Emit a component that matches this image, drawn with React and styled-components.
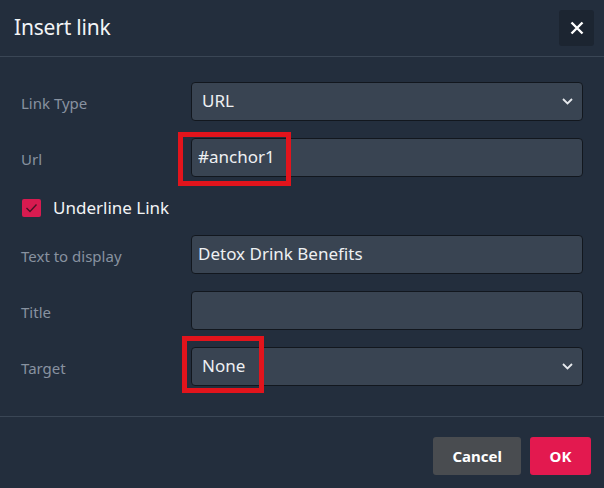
import React from 'react'
import styled, { createGlobalStyle } from 'styled-components'

const GlobalStyle = createGlobalStyle`
   html, body {
      margin: 0;
      padding: 0;
      background: #232e3d;
   }
   * {
      box-sizing: border-box;
   }
`

const fields = [
   { label: 'Link Type', kind: 'select', value: 'URL' },
   { label: 'Url', kind: 'input', value: '#anchor1', mark: { left: -13, top: -6, width: 113, height: 54 } },
   { kind: 'check', label: 'Underline Link' },
   { label: 'Text to display', kind: 'input', value: 'Detox Drink Benefits' },
   { label: 'Title', kind: 'input', value: '' },
   { label: 'Target', kind: 'select', value: 'None', mark: { left: -9, top: -11, width: 82, height: 57 } },
]

function Chevron() {
   return (
      <ChevronIcon width="11" height="7" viewBox="0 0 11 7">
         <path d="M1 1l4.5 4.5L10 1" fill="none" stroke="#e6e9ed" strokeWidth="1.8" />
      </ChevronIcon>
   )
}

function Field({ field }) {
   if (field.kind === 'check') {
      return (
         <CheckRow>
            <Box>
               <svg width="13" height="10" viewBox="0 0 13 10">
                  <path d="M1.5 5l3.5 3.5L11.5 1.5" fill="none" stroke="#4a1225" strokeWidth="1.4" />
               </svg>
            </Box>
            <CheckLabel>{field.label}</CheckLabel>
         </CheckRow>
      )
   }

   return (
      <Row>
         <Label>{field.label}</Label>
         <Control>
            {field.kind === 'select' ? (
               <>
                  <Select value={field.value} onChange={() => {}}>
                     <option>{field.value}</option>
                  </Select>
                  <Chevron />
               </>
            ) : (
               <Input value={field.value} readOnly />
            )}
            {field.mark && (
               <Mark
                  style={{
                     left: field.mark.left,
                     top: field.mark.top,
                     width: field.mark.width,
                     height: field.mark.height,
                  }}
               />
            )}
         </Control>
      </Row>
   )
}

export default function App() {
   return (
      <>
         <GlobalStyle />
         <Dialog>
            <Header>
               <Title>Insert link</Title>
               <CloseButton>
                  <svg width="14" height="14" viewBox="0 0 14 14">
                     <path d="M1.5 1.5l11 11M12.5 1.5l-11 11" stroke="#ffffff" strokeWidth="2.4" />
                  </svg>
               </CloseButton>
            </Header>
            <Body>
               {fields.map((f) => (
                  <Field key={f.label} field={f} />
               ))}
            </Body>
            <Footer>
               <Button>Cancel</Button>
               <Button primary>OK</Button>
            </Footer>
         </Dialog>
      </>
   )
}

const Dialog = styled.div`
   width: 604px;
   height: 488px;
   background: #232e3d;
   font-family: "Noto Sans", "Open Sans", sans-serif;
   display: flex;
   flex-direction: column;
`

const Header = styled.div`
   height: 57px;
   display: flex;
   align-items: center;
   justify-content: space-between;
   padding: 0 10px 0 14px;
   border-bottom: 1px solid #3a4655;
`

const Title = styled.h1`
   margin: 0 0 2px;
   font-size: 21px;
   font-weight: 400;
   color: #f2f4f6;
   letter-spacing: -0.2px;
`

const CloseButton = styled.div`
   width: 35px;
   height: 36px;
   margin-top: -1px;
   border-radius: 3px;
   background: #1c2531;
   display: flex;
   align-items: center;
   justify-content: center;
`

const Body = styled.div`
   flex: 1;
   padding: 25px 21px 0;
   display: flex;
   flex-direction: column;
   border-bottom: 1px solid #3a4655;
`

const Row = styled.div`
   display: flex;
   align-items: center;
   height: 39px;
   margin-bottom: 17px;
`

const Label = styled.div`
   width: 170px;
   flex-shrink: 0;
   font-size: 15px;
   color: #8892a0;
   padding-top: 2px;
`

const Control = styled.div`
   position: relative;
   flex: 1;
   height: 100%;
`

const fieldBase = `
   width: 100%;
   height: 100%;
   margin: 0;
   border: 1px solid #12171e;
   border-radius: 4px;
   background: #394452;
   color: #eef0f2;
   font-family: "Noto Sans", "Open Sans", sans-serif;
   font-size: 17px;
   outline: none;
`

const Input = styled.input`
   ${fieldBase}
   padding: 0 6px 2px;
`

const Select = styled.select`
   ${fieldBase}
   appearance: none;
   padding: 0 10px 2px;
`

const ChevronIcon = styled.svg`
   position: absolute;
   right: 10px;
   top: 16px;
   pointer-events: none;
`

const Mark = styled.div`
   position: absolute;
   border: 5px solid #e2141c;
   pointer-events: none;
`

const CheckRow = styled.div`
   display: flex;
   align-items: center;
   height: 30px;
   margin: -1px 0 12px 1px;
`

const Box = styled.div`
   width: 19px;
   height: 18px;
   border-radius: 2px;
   background: #d81b50;
   display: flex;
   align-items: center;
   justify-content: center;
`

const CheckLabel = styled.span`
   margin-left: 12px;
   font-size: 17px;
   color: #f2f4f6;
   padding-bottom: 2px;
`

const Footer = styled.div`
   height: 71px;
   display: flex;
   justify-content: flex-end;
   align-items: flex-start;
   gap: 9px;
   padding: 20px 13px 0 0;
`

const Button = styled.div`
   height: 38px;
   padding: 0 19px;
   border-radius: 3px;
   background: ${(p) => (p.primary ? '#e3194f' : '#494c50')};
   color: #ffffff;
   font-size: 15px;
   font-weight: 700;
   display: flex;
   align-items: center;
   justify-content: center;
   min-width: ${(p) => (p.primary ? '61px' : '87px')};
`
